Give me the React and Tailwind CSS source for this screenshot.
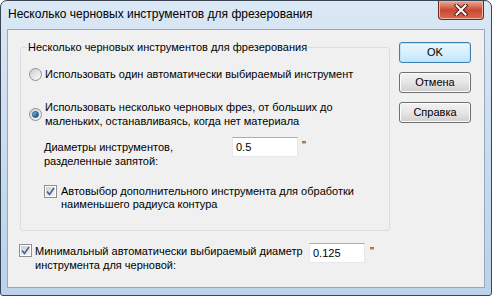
import { useState } from "react";

const font = { fontFamily: '"Liberation Sans", Arial, sans-serif' };

function Radio({ checked }) {
  return (
    <span className="relative flex h-[13px] w-[13px] shrink-0 items-center justify-center rounded-full border border-[#8e8f8f] bg-gradient-to-br from-[#cfcfcf] to-[#fbfbfb]">
      {checked && (
        <span className="h-[7px] w-[7px] rounded-full border border-[#1c4f78] bg-gradient-to-br from-[#9fd6f4] via-[#2f86c4] to-[#0d4d80]" />
      )}
    </span>
  );
}

function Check({ checked }) {
  return (
    <span className="flex h-[13px] w-[13px] shrink-0 items-center justify-center border border-[#8e8f8f] bg-white p-[1px]">
      <span className="flex h-full w-full items-center justify-center bg-gradient-to-br from-[#cbcfd5] to-[#f6f6f6]">
        {checked && (
          <svg width="9" height="9" viewBox="0 0 9 9">
            <path d="M1 4.5 L3.5 7.5 L8 1" fill="none" stroke="#4a5f97" strokeWidth="1.6" />
          </svg>
        )}
      </span>
    </span>
  );
}

function Btn({ children, primary }) {
  return (
    <button
      className={`h-[21px] w-[72px] rounded-[3px] border text-[11px] leading-none text-black ${
        primary
          ? "border-[#3c7fb1] bg-gradient-to-b from-[#eaf6fd] via-[#d9f0fc] to-[#bee6fd] shadow-[inset_0_0_0_1px_#bfe3f7]"
          : "border-[#707070] bg-gradient-to-b from-[#f2f2f2] via-[#e6e6e6] to-[#cfcfcf] shadow-[inset_0_0_0_1px_#fcfcfc]"
      }`}
    >
      {children}
    </button>
  );
}

export default function App() {
  const [diam, setDiam] = useState("0.5");
  const [minD, setMinD] = useState("0.125");

  return (
    <div className="h-[296px] w-[492px] bg-white text-[11px] text-black" style={font}>
      <div className="flex h-full w-full flex-col rounded-t-[7px] rounded-b-[3px] border border-[#3a4554] bg-gradient-to-b from-[#dbe8f5] via-[#c9dcf0] to-[#bcd2ea] px-[6px] pb-[7px]">
        {/* Title bar */}
        <div className="flex h-[28px] items-start">
          <span className="pt-[6px] pl-[1px] text-[12px] leading-[14px]">
            Несколько черновых инструментов для фрезерования
          </span>
          <div className="ml-auto mr-[1px] flex h-[19px] w-[46px] items-center justify-center rounded-b-[4px] border border-t-0 border-[#6b2a1e] bg-gradient-to-b from-[#e9a99b] via-[#c9472f] to-[#d76a50] shadow-[inset_0_0_0_1px_#f0b3a4]">
            <svg width="14" height="12" viewBox="0 0 14 12">
              <path d="M2.5 1.5 L11.5 10.5 M11.5 1.5 L2.5 10.5" stroke="#4a1a12" strokeWidth="4" strokeLinecap="square" />
              <path d="M2.5 1.5 L11.5 10.5 M11.5 1.5 L2.5 10.5" stroke="#ffffff" strokeWidth="2" strokeLinecap="square" />
            </svg>
          </div>
        </div>

        {/* Client area */}
        <div className="flex flex-1 border border-[#95a8bd] bg-[#f0f0f0] pl-[12px] pt-[11px]">
          <div className="flex w-[370px] flex-col">
            <fieldset className="rounded-[3px] border border-[#d5dfe5] px-0 pb-[19px]">
              <legend className="ml-[6px] px-[1px] leading-[13px]">
                Несколько черновых инструментов для фрезерования
              </legend>

              <div className="mt-[14px] ml-[8px] flex items-center gap-[3px]">
                <Radio />
                <span className="leading-[13px]">Использовать один автоматически выбираемый инструмент</span>
              </div>

              <div className="mt-[19px] ml-[8px] flex items-center gap-[3px]">
                <Radio checked />
                <span className="leading-[14px]">
                  Использовать несколько черновых фрез, от больших до
                  <br />
                  маленьких, останавливаясь, когда нет материала
                </span>
              </div>

              <div className="mt-[9px] ml-[23px] flex items-start">
                <span className="mt-[3px] w-[188px] leading-[14px]">
                  Диаметры инструментов,
                  <br />
                  разделенные запятой:
                </span>
                <input
                  value={diam}
                  onChange={(e) => setDiam(e.target.value)}
                  className="h-[20px] w-[66px] border border-[#e3e9ef] border-t-[#abadb3] bg-white px-[3px] text-[11px] outline-none"
                />
                <span className="ml-[4px] mt-[2px] leading-[13px]">"</span>
              </div>

              <div className="mt-[17px] ml-[23px] flex items-start gap-[4px]">
                <Check checked />
                <span className="leading-[13px]">
                  Автовыбор дополнительного инструмента для обработки
                  <br />
                  наименьшего радиуса контура
                </span>
              </div>
            </fieldset>

            <div className="mt-[13px] -ml-[1px] flex items-start">
              <Check checked />
              <span className="ml-[3px] w-[274px] leading-[14px]">
                Минимальный автоматически выбираемый диаметр
                <br />
                инструмента для черновой:
              </span>
              <input
                value={minD}
                onChange={(e) => setMinD(e.target.value)}
                className="-mt-[1px] h-[20px] w-[56px] border border-[#e3e9ef] border-t-[#abadb3] bg-white px-[3px] text-[11px] outline-none"
              />
              <span className="ml-[5px] mt-[1px] leading-[13px]">"</span>
            </div>
          </div>

          <div className="ml-[9px] mt-[1px] flex flex-col gap-[9px]">
            <Btn primary>OK</Btn>
            <Btn>Отмена</Btn>
            <Btn>Справка</Btn>
          </div>
        </div>
      </div>
    </div>
  );
}
